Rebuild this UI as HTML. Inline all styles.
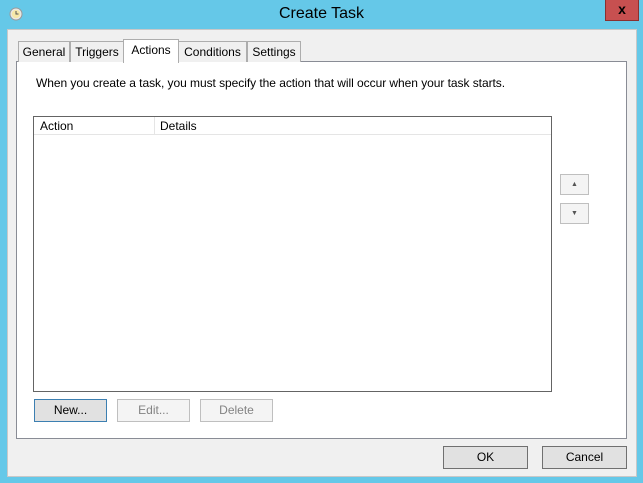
<!DOCTYPE html>
<html><head><style>
*{margin:0;padding:0;box-sizing:border-box}
body{width:643px;height:483px;background:#65c8e8;position:relative;overflow:hidden;font-family:"Liberation Sans",sans-serif;font-size:12px;color:#000}
.a{position:absolute}
.title{left:0;width:643px;top:5px;text-align:center;font-size:16px;color:#000}
.close{left:605px;top:0;width:34px;height:21px;background:#c75050;border:1px solid #8a3030;border-top:none;color:#000;font-weight:bold;font-size:14px;text-align:center;line-height:19px}
.client{left:7px;top:29px;width:630px;height:448px;background:#f0f0f0;border:1px solid #c8c8c8}
.tab{top:41px;height:21px;background:#f0f0f0;border:1px solid #adadad;border-bottom:none;text-align:center;line-height:20px;font-size:12px}
.panel{left:16px;top:61px;width:611px;height:378px;background:#fff;border:1px solid #898c95}
.btn{height:23px;background:#e1e1e1;border:1px solid #adadad;text-align:center;line-height:21px}
.dis{background:#f4f4f4;border-color:#bfbfbf;color:#838383}
</style></head><body>
<svg class="a" style="left:9px;top:7px" width="14" height="14" viewBox="0 0 14 14"><circle cx="7" cy="7" r="6" fill="#e8e8e8" stroke="#999"/><circle cx="7" cy="7" r="4.3" fill="#f6e7a8"/><path d="M7 4v3h2.5" stroke="#555" fill="none"/></svg>
<div class="a title">Create Task</div>
<div class="a close">x</div>
<div class="a client"></div>
<div class="a panel"></div>
<div class="a tab" style="left:18px;width:52px">General</div>
<div class="a tab" style="left:70px;width:54px">Triggers</div>
<div class="a tab" style="left:178px;width:69px">Conditions</div>
<div class="a tab" style="left:247px;width:54px">Settings</div>
<div class="a tab" style="left:123px;top:39px;height:24px;width:56px;background:#fff;line-height:20px">Actions</div>
<div class="a" style="left:36px;top:76px;letter-spacing:-0.05px">When you create a task, you must specify the action that will occur when your task starts.</div>
<div class="a" style="left:33px;top:116px;width:519px;height:276px;border:1px solid #646464;background:#fff">
 <div class="a" style="left:0;top:0;width:517px;height:18px;border-bottom:1px solid #e5e5e5"></div>
 <div class="a" style="left:6px;top:2px">Action</div>
 <div class="a" style="left:120px;top:0;width:1px;height:18px;background:#e5e5e5"></div>
 <div class="a" style="left:126px;top:2px">Details</div>
</div>
<div class="a btn dis" style="left:560px;top:174px;width:29px;height:21px;color:#555;font-size:7px;line-height:19px">▲</div>
<div class="a btn dis" style="left:560px;top:203px;width:29px;height:21px;color:#555;font-size:7px;line-height:19px">▼</div>
<div class="a btn" style="left:34px;top:399px;width:73px;border-color:#3c7fb1">New...</div>
<div class="a btn dis" style="left:117px;top:399px;width:73px">Edit...</div>
<div class="a btn dis" style="left:200px;top:399px;width:73px">Delete</div>
<div class="a btn" style="left:443px;top:446px;width:85px;border-color:#707070">OK</div>
<div class="a btn" style="left:542px;top:446px;width:85px;border-color:#707070">Cancel</div>
</body></html>
